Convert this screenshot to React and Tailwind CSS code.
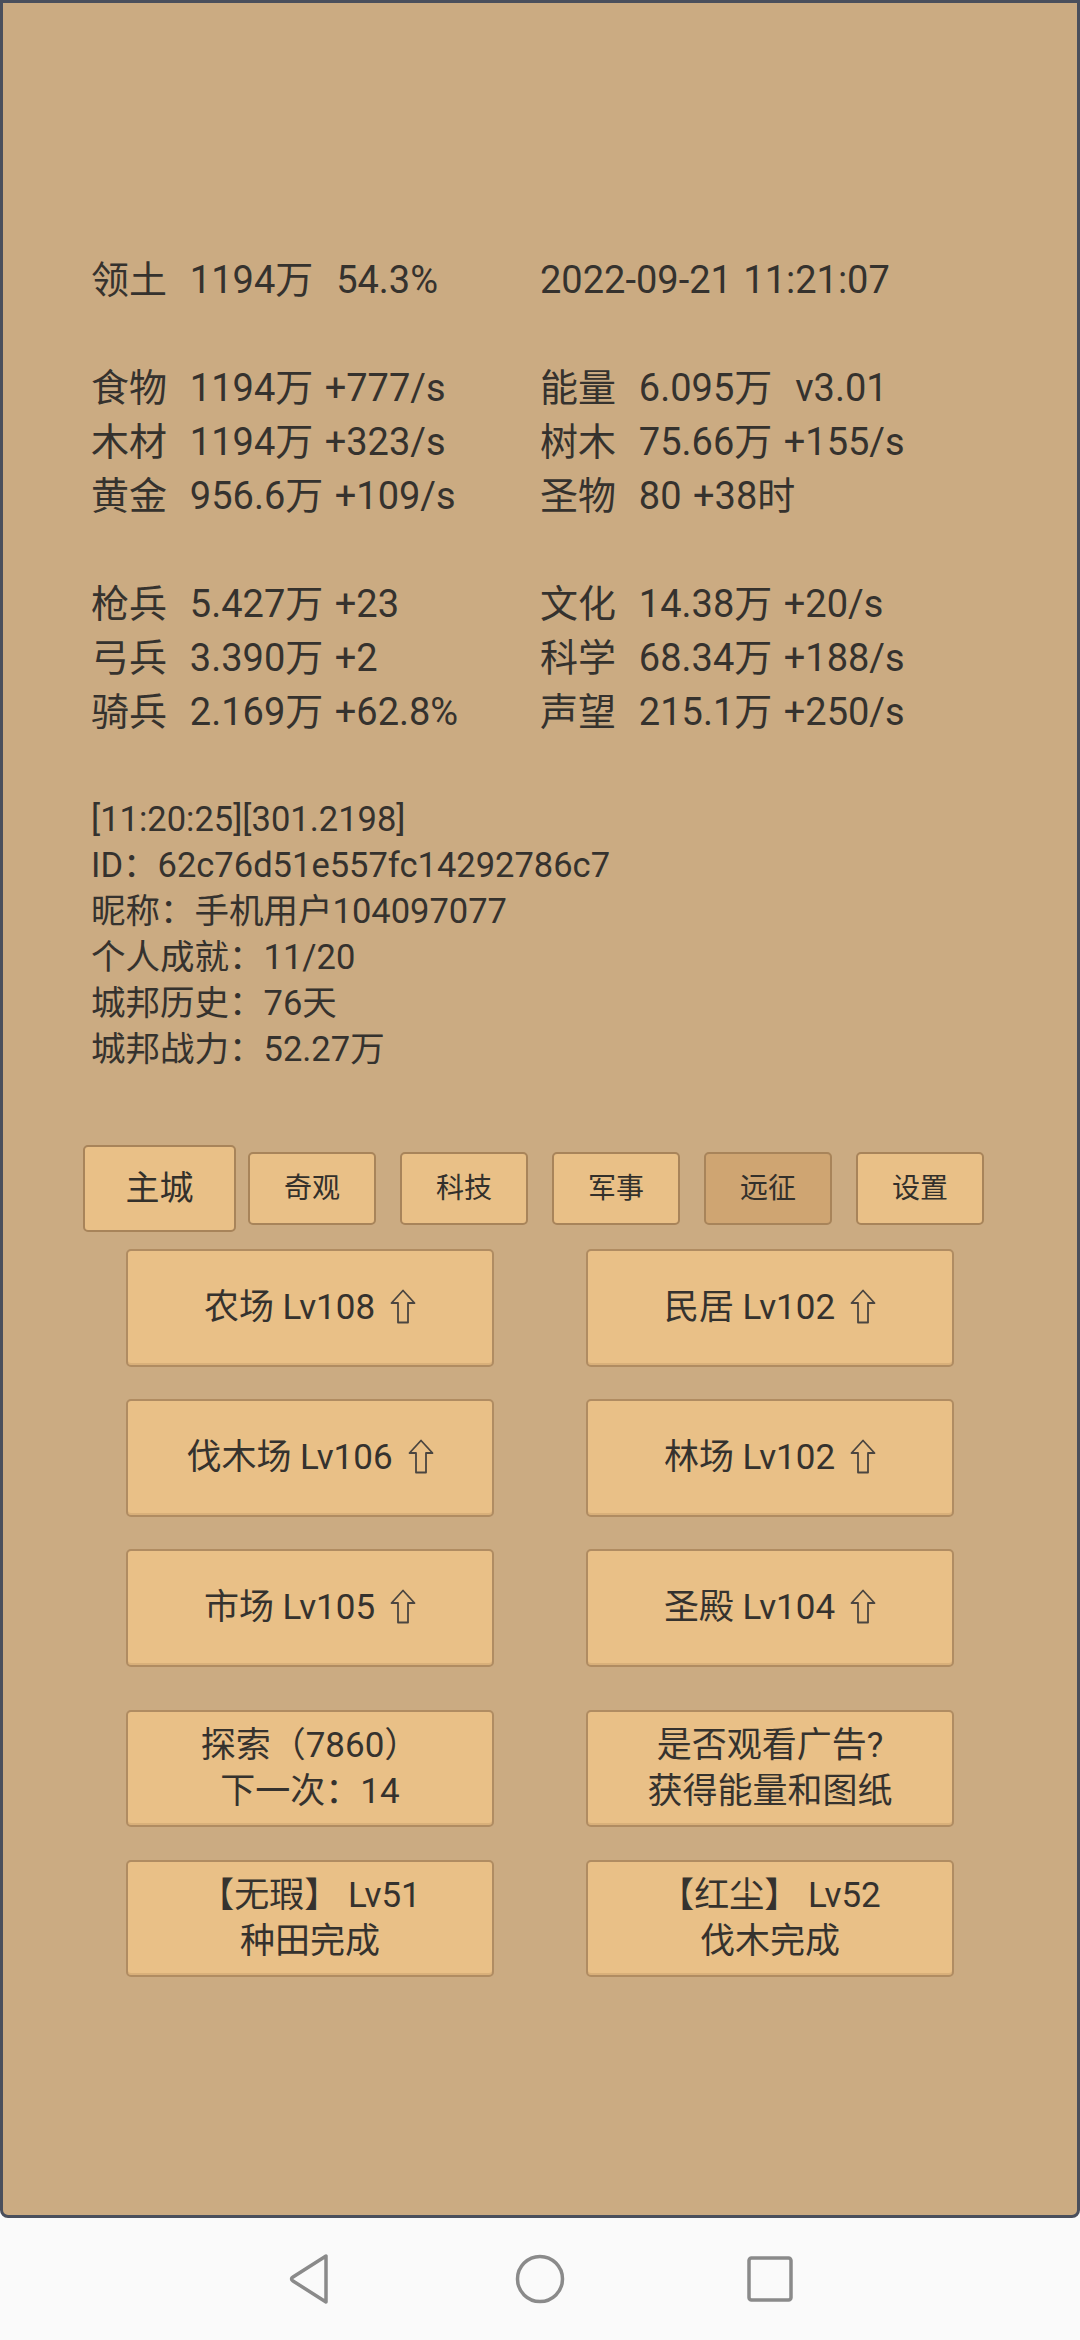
import React from "react";

const stats = [
  ["领土  1194万  54.3%", "2022-09-21 11:21:07"],
  null,
  ["食物  1194万 +777/s", "能量  6.095万  v3.01"],
  ["木材  1194万 +323/s", "树木  75.66万 +155/s"],
  ["黄金  956.6万 +109/s", "圣物  80 +38时"],
  null,
  ["枪兵  5.427万 +23", "文化  14.38万 +20/s"],
  ["弓兵  3.390万 +2", "科学  68.34万 +188/s"],
  ["骑兵  2.169万 +62.8%", "声望  215.1万 +250/s"],
];

const info = [
  "[11:20:25][301.2198]",
  "ID：62c76d51e557fc14292786c7",
  "昵称：手机用户104097077",
  "个人成就：11/20",
  "城邦历史：76天",
  "城邦战力：52.27万",
];

const tabs = ["奇观", "科技", "军事", "远征", "设置"];

const buildings = [
  "农场 Lv108",
  "民居 Lv102",
  "伐木场 Lv106",
  "林场 Lv102",
  "市场 Lv105",
  "圣殿 Lv104",
];

function UpArrow() {
  return (
    <svg width="26" height="35" viewBox="0 0 26 35" className="inline-block ml-[15px] -mt-[4px]">
      <path
        d="M13 1.5 L24.5 14 H18 V33.5 H8 V14 H1.5 Z"
        fill="none"
        stroke="#4a4540"
        strokeWidth="1.8"
        strokeLinejoin="round"
      />
    </svg>
  );
}

function Btn({ children, className = "" }) {
  return (
    <div
      className={
        "bg-[#e9c087] border-2 border-[#b08c62] rounded-[5px] flex flex-col items-center justify-center text-[35px] shadow-[inset_0_-2px_0_#d9b07a] " +
        className
      }
    >
      {children}
    </div>
  );
}

export default function App() {
  return (
    <div className="w-[1080px] h-[2340px] flex flex-col bg-[#fafafa] font-['Roboto','Noto_Sans_CJK_SC',sans-serif] text-[#35322e]">
      <div className="h-[2218px] shrink-0 bg-[#cbab82] border-[3px] border-[#4a4f5c] rounded-b-[8px] pt-[250px]">
        <div className="pl-[88px] text-[38px] leading-[54px] whitespace-pre [word-spacing:2px]">
          {stats.map((row, i) =>
            row ? (
              <div key={i} className="flex">
                <div className="w-[449px]">{row[0]}</div>
                <div>{row[1]}</div>
              </div>
            ) : (
              <div key={i} className="h-[54px]" />
            )
          )}
        </div>

        <div className="pl-[88px] mt-[57px] text-[34.5px] leading-[46px]">
          {info.map((line) => (
            <div key={line}>{line}</div>
          ))}
        </div>

        <div className="pl-[80px] mt-[73px] flex items-center gap-[24px]">
          <div className="w-[153px] h-[87px] mr-[-12px] bg-[#e9c087] border-2 border-[#a8845a] rounded-[5px] flex items-center justify-center text-[34px] text-[#33302b]">
            主城
          </div>
          {tabs.map((t) => (
            <div
              key={t}
              className={
                t === "远征"
                  ? "w-[128px] h-[73px] bg-[#cfa572] border-2 border-[#a8845a] rounded-[5px] flex items-center justify-center text-[28px] text-[#33302b]"
                  : "w-[128px] h-[73px] bg-[#e9c087] border-2 border-[#a8845a] rounded-[5px] flex items-center justify-center text-[28px] text-[#33302b]"
              }
            >
              {t}
            </div>
          ))}
        </div>

        <div className="pl-[123px] mt-[17px] grid grid-cols-[368px_368px] gap-x-[92px] gap-y-[32px]">
          {buildings.map((b) => (
            <Btn key={b} className="h-[118px]">
              <div className="flex items-center whitespace-pre">
                <span>{b}</span>
                <UpArrow />
              </div>
            </Btn>
          ))}
        </div>

        <div className="pl-[123px] mt-[43px] grid grid-cols-[368px_368px] gap-x-[92px] gap-y-[33px] leading-[46px]">
          <Btn className="h-[117px]">
            <div>探索（7860）</div>
            <div>下一次：14</div>
          </Btn>
          <Btn className="h-[117px]">
            <div>是否观看广告?</div>
            <div>获得能量和图纸</div>
          </Btn>
          <Btn className="h-[117px]">
            <div className="whitespace-pre">【无瑕】 Lv51</div>
            <div>种田完成</div>
          </Btn>
          <Btn className="h-[117px]">
            <div className="whitespace-pre">【红尘】 Lv52</div>
            <div>伐木完成</div>
          </Btn>
        </div>
      </div>

      <div className="flex-1 grid grid-cols-[230px_230px_230px] justify-center items-center">
        <div className="flex justify-center">
          <svg width="44" height="52" viewBox="0 0 44 52">
            <path
              d="M38 3 L38 49 L5 28 Q2 26 5 24 Z"
              fill="none"
              stroke="#8a8a8a"
              strokeWidth="3.5"
              strokeLinejoin="round"
            />
          </svg>
        </div>
        <div className="flex justify-center">
          <svg width="52" height="52" viewBox="0 0 52 52">
            <circle cx="26" cy="26" r="22.5" fill="none" stroke="#8a8a8a" strokeWidth="3.5" />
          </svg>
        </div>
        <div className="flex justify-center">
          <svg width="48" height="48" viewBox="0 0 48 48">
            <rect x="3" y="3" width="42" height="42" rx="2.5" fill="none" stroke="#8a8a8a" strokeWidth="3.5" />
          </svg>
        </div>
      </div>
    </div>
  );
}
